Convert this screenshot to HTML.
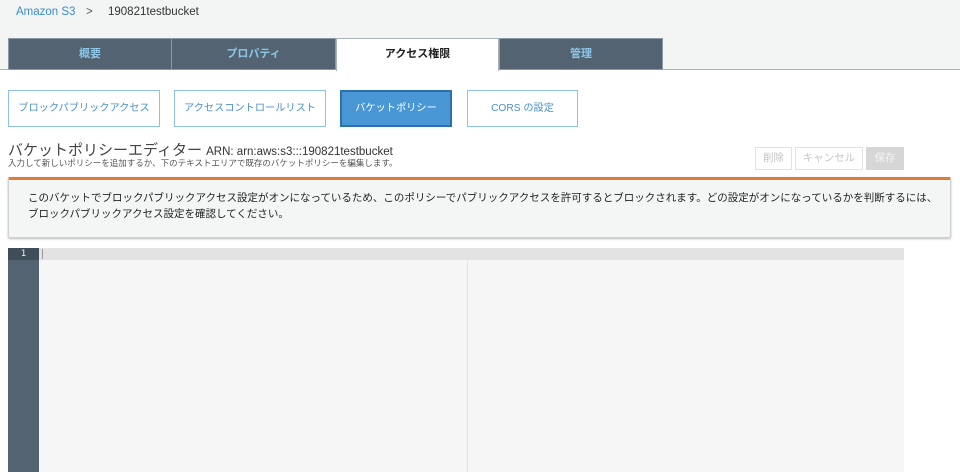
<!DOCTYPE html>
<html><head><meta charset="utf-8"><style>
*{margin:0;padding:0;box-sizing:border-box}
body{width:960px;height:472px;background:#fff;font-family:"Liberation Sans","Noto Sans CJK JP",sans-serif;position:relative;overflow:hidden}
.top{position:absolute;left:0;top:0;width:960px;height:70px;background:#f3f4f4;border-bottom:1px solid #aab4bb}
.a{position:absolute}
.crumb{top:6px;font-size:11.5px}
.tab{position:absolute;top:38px;height:32px;background:#536372;color:#8cc7e8;font-size:11px;font-weight:bold;text-align:center;line-height:31px;border:1px solid #8a99a5}
.tab.act{background:#fff;color:#222;border-color:#aab4bb;border-bottom:none;height:33px}
.btn{position:absolute;top:90px;height:37px;border:1px solid #8ec2ea;color:#4a90c8;font-size:10.2px;text-align:center;line-height:35px;background:#fff}
.btn.on{background:#4a97d5;color:#fff;border:2px solid #2c6fb0;line-height:33px}
.sb{position:absolute;top:147px;height:23px;border:1px solid #e2e2e2;color:#c4c4c4;font-size:10.5px;text-align:center;line-height:21px}
</style></head><body>
<div class="top"></div>
<div class="a crumb" style="left:16px;color:#3a8ccd">Amazon S3</div>
<div class="a crumb" style="left:86px;color:#555">&gt;</div>
<div class="a crumb" style="left:108px;color:#333">190821testbucket</div>
<div class="tab" style="left:8px;width:164px">概要</div>
<div class="tab" style="left:171px;width:165px">プロパティ</div>
<div class="tab act" style="left:336px;width:163px">アクセス権限</div>
<div class="tab" style="left:499px;width:164px">管理</div>
<div class="btn" style="left:8px;width:152px">ブロックパブリックアクセス</div>
<div class="btn" style="left:174px;width:152px">アクセスコントロールリスト</div>
<div class="btn on" style="left:340px;width:112px">バケットポリシー</div>
<div class="btn" style="left:467px;width:111px">CORS の設定</div>
<div class="a" style="left:8px;top:139px;font-size:15px;color:#444;white-space:nowrap">バケットポリシーエディター <span style="font-size:11.5px;color:#333">ARN: arn:aws:s3:::190821testbucket</span></div>
<div class="a" style="left:8px;top:157px;font-size:8.5px;color:#555;white-space:nowrap">入力して新しいポリシーを追加するか、下のテキストエリアで既存のバケットポリシーを編集します。</div>
<div class="sb" style="left:755px;width:37px">削除</div>
<div class="sb" style="left:795px;width:68px">キャンセル</div>
<div class="sb" style="left:866px;width:38px;background:#d6d6d6;color:#f4f4f4;border-color:#d6d6d6">保存</div>
<div class="a" style="left:8px;top:177px;width:943px;height:61px;background:#f4f5f5;border:1px solid #cfd2d4;border-top:3px solid #e07b39;border-radius:2px;box-shadow:0 1px 2px #bbb"></div>
<div class="a" style="left:28px;top:190px;font-size:10.5px;line-height:16px;color:#222;white-space:nowrap">このバケットでブロックパブリックアクセス設定がオンになっているため、このポリシーでパブリックアクセスを許可するとブロックされます。どの設定がオンになっているかを判断するには、<br>ブロックパブリックアクセス設定を確認してください。</div>
<div class="a" style="left:8px;top:248px;width:896px;height:224px;background:#f6f6f6"></div>
<div class="a" style="left:38px;top:248px;width:866px;height:12px;background:#e3e3e3"></div>
<div class="a" style="left:467px;top:248px;width:1px;height:224px;background:#e4e4e4"></div>
<div class="a" style="left:8px;top:248px;width:31px;height:224px;background:#536372"></div>
<div class="a" style="left:8px;top:248px;width:31px;height:12px;background:#3f4d59;color:#eee;font-size:9px;font-family:'DejaVu Sans Mono',monospace;text-align:center;line-height:12px">1</div>
<div class="a" style="left:42px;top:249px;width:1px;height:10px;background:#999"></div>
</body></html>
